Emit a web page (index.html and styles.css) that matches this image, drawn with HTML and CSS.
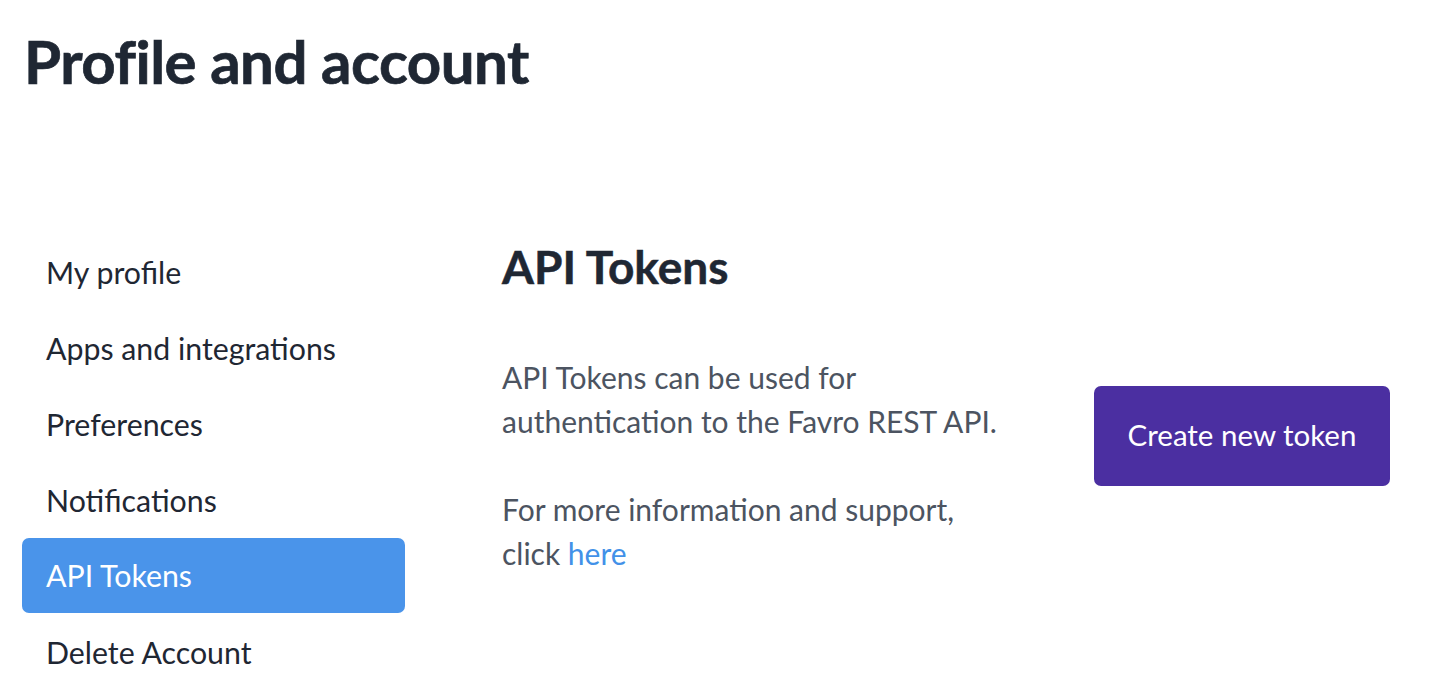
FILE: index.html
```html
<!DOCTYPE html>
<html lang="en">
<head>
<meta charset="utf-8">
<title>Profile and account</title>
<link rel="stylesheet" href="styles.css">
</head>
<body>
<div class="page">
  <h1 class="title">Profile and account</h1>
  <div class="main">
    <nav class="nav">
      <a class="nav-item">My profile</a>
      <a class="nav-item">Apps and integrations</a>
      <a class="nav-item">Preferences</a>
      <a class="nav-item">Notifications</a>
      <a class="nav-item active">API Tokens</a>
      <a class="nav-item">Delete Account</a>
    </nav>
    <section class="content">
      <h2 class="heading">API Tokens</h2>
      <div class="row">
        <div class="text">
          <p>API Tokens can be used for authentication to the Favro REST API.</p>
          <p>For more information and support,<br>click <a class="link">here</a></p>
        </div>
        <button class="btn">Create new token</button>
      </div>
    </section>
  </div>
</div>
</body>
</html>
```

FILE: styles.css
```css
html, body {
  margin: 0;
  padding: 0;
  background: #ffffff;
}
body {
  font-family: Lato, "Liberation Sans", sans-serif;
  color: #1f2733;
  overflow: hidden;
}
.page {
  padding-left: 24px;
  padding-top: 26px;
}
.title {
  margin: 0;
  font-size: 60px;
  line-height: 71px;
  font-weight: 700;
  color: #1f2733;
  letter-spacing: -0.5px;
  -webkit-text-stroke: 0.7px #1f2733;
}
.main {
  display: flex;
  margin-top: 137px;
}
.nav {
  display: flex;
  flex-direction: column;
  width: 383px;
  margin-left: -2px;
}
.nav-item {
  display: block;
  height: 76px;
  line-height: 76px;
  padding-left: 24px;
  font-size: 30.3px;
  color: #1f2733;
  border-radius: 7px;
}
.nav-item.active {
  background: #4a94ea;
  color: #ffffff;
  height: 75px;
  line-height: 75px;
  margin-bottom: 1px;
}
.content {
  margin-left: 97px;
  padding-top: 6px;
}
.heading {
  margin: 0;
  font-size: 46px;
  line-height: 53px;
  font-weight: 700;
  color: #1f2733;
  -webkit-text-stroke: 0.5px #1f2733;
}
.row {
  display: flex;
  margin-top: 62px;
}
.text {
  width: 505px;
  flex: none;
  font-size: 30px;
  line-height: 44px;
  color: #4c5461;
}
.text p {
  margin: 0 0 44px 0;
}
.link {
  color: #4291e8;
}
.btn {
  margin-top: 31px;
  margin-left: 87px;
  width: 296px;
  height: 100px;
  flex: none;
  border: none;
  border-radius: 7px;
  background: #4b2fa1;
  color: #ffffff;
  font-family: Lato, "Liberation Sans", sans-serif;
  font-size: 29.5px;
  line-height: 1;
  padding: 0 0 2px 0;
  cursor: pointer;
}
```
